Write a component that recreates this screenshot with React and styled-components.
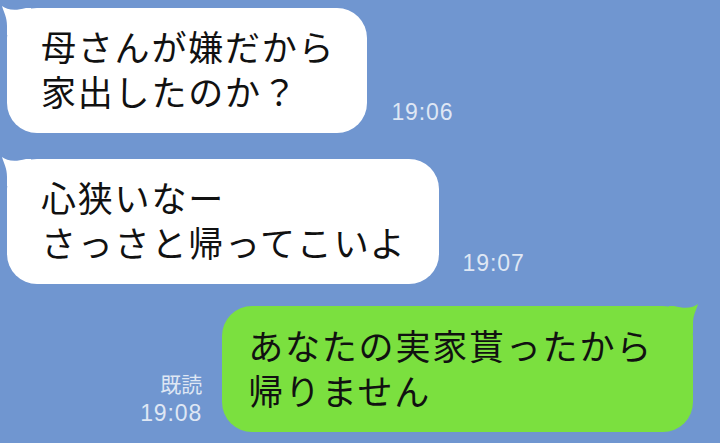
import React from "react";
import styled, { createGlobalStyle } from "styled-components";

const GlobalStyle = createGlobalStyle`
  html, body { margin: 0; padding: 0; }
  body {
    background: #7096d0;
    width: 720px;
    height: 443px;
    overflow: hidden;
    font-family: "Noto Sans CJK JP", "Noto Sans", sans-serif;
  }
`;

const Screen = styled.div`
  width: 720px;
  height: 443px;
  background: #7096d0;
  display: flex;
  flex-direction: column;
  box-sizing: border-box;
  padding-top: 8px;
`;

const Row = styled.div`
  display: flex;
  align-items: flex-end;
  justify-content: ${(p) => (p.$mine ? "flex-end" : "flex-start")};
  gap: ${(p) => (p.$mine ? "20px" : "24px")};
  margin-top: ${(p) => p.$top || 0}px;
  padding: ${(p) => (p.$mine ? "0 27px 0 0" : "0 0 0 7px")};
`;

const Bubble = styled.div`
  position: relative;
  display: flex;
  flex-direction: column;
  background: ${(p) => (p.$mine ? "#7be03f" : "#ffffff")};
  color: #111;
  border-radius: 30px;
  padding: ${(p) => (p.$mine ? "16px 40px 20px 26px" : "15px 32px 20px 34px")};
  font-family: "Noto Sans CJK JP", sans-serif;
  font-size: 35px;
  letter-spacing: 1.8px;
  white-space: nowrap;
`;

const Line = styled.div`
  height: 45px;
  line-height: 45px;
`;

const Tail = styled.svg`
  position: absolute;
  top: -3px;
  width: 30px;
  height: 30px;
  ${(p) => (p.$mine ? "right: -6px; transform: scaleX(-1);" : "left: -6px;")}
`;

const Time = styled.span`
  font-family: "Liberation Sans", Arial, sans-serif;
  font-size: 23px;
  letter-spacing: 0.9px;
  line-height: 1;
  color: #dfe7f4;
  margin-bottom: ${(p) => p.$bottom || 0}px;
`;

const Meta = styled.div`
  display: flex;
  flex-direction: column;
  align-items: flex-end;
  margin-bottom: 7px;
  gap: 8px;
`;

const Read = styled.span`
  font-family: "Noto Sans CJK JP", sans-serif;
  font-size: 21px;
  line-height: 1;
  color: #dfe7f4;
`;

function BubbleTail({ mine }) {
  return (
    <Tail $mine={mine} viewBox="0 0 30 30">
      <path
        d="M1 1 C3 8 6 12 6 21 L6 30 L30 30 L30 3 L25 3 C14 6 6 5 1 1 Z"
        fill={mine ? "#7be03f" : "#ffffff"}
      />
    </Tail>
  );
}

function Message({ mine, lines }) {
  return (
    <Bubble $mine={mine}>
      <BubbleTail mine={mine} />
      {lines.map((l) => (
        <Line key={l}>{l}</Line>
      ))}
    </Bubble>
  );
}

export default function App() {
  return (
    <>
      <GlobalStyle />
      <Screen>
        <Row>
          <Message lines={["母さんが嫌だから", "家出したのか？"]} />
          <Time $bottom={9}>19:06</Time>
        </Row>
        <Row $top={26}>
          <Message lines={["心狭いなー", "さっさと帰ってこいよ"]} />
          <Time $bottom={9}>19:07</Time>
        </Row>
        <Row $mine $top={22}>
          <Meta>
            <Read>既読</Read>
            <Time>19:08</Time>
          </Meta>
          <Message mine lines={["あなたの実家貰ったから", "帰りません"]} />
        </Row>
      </Screen>
    </>
  );
}
